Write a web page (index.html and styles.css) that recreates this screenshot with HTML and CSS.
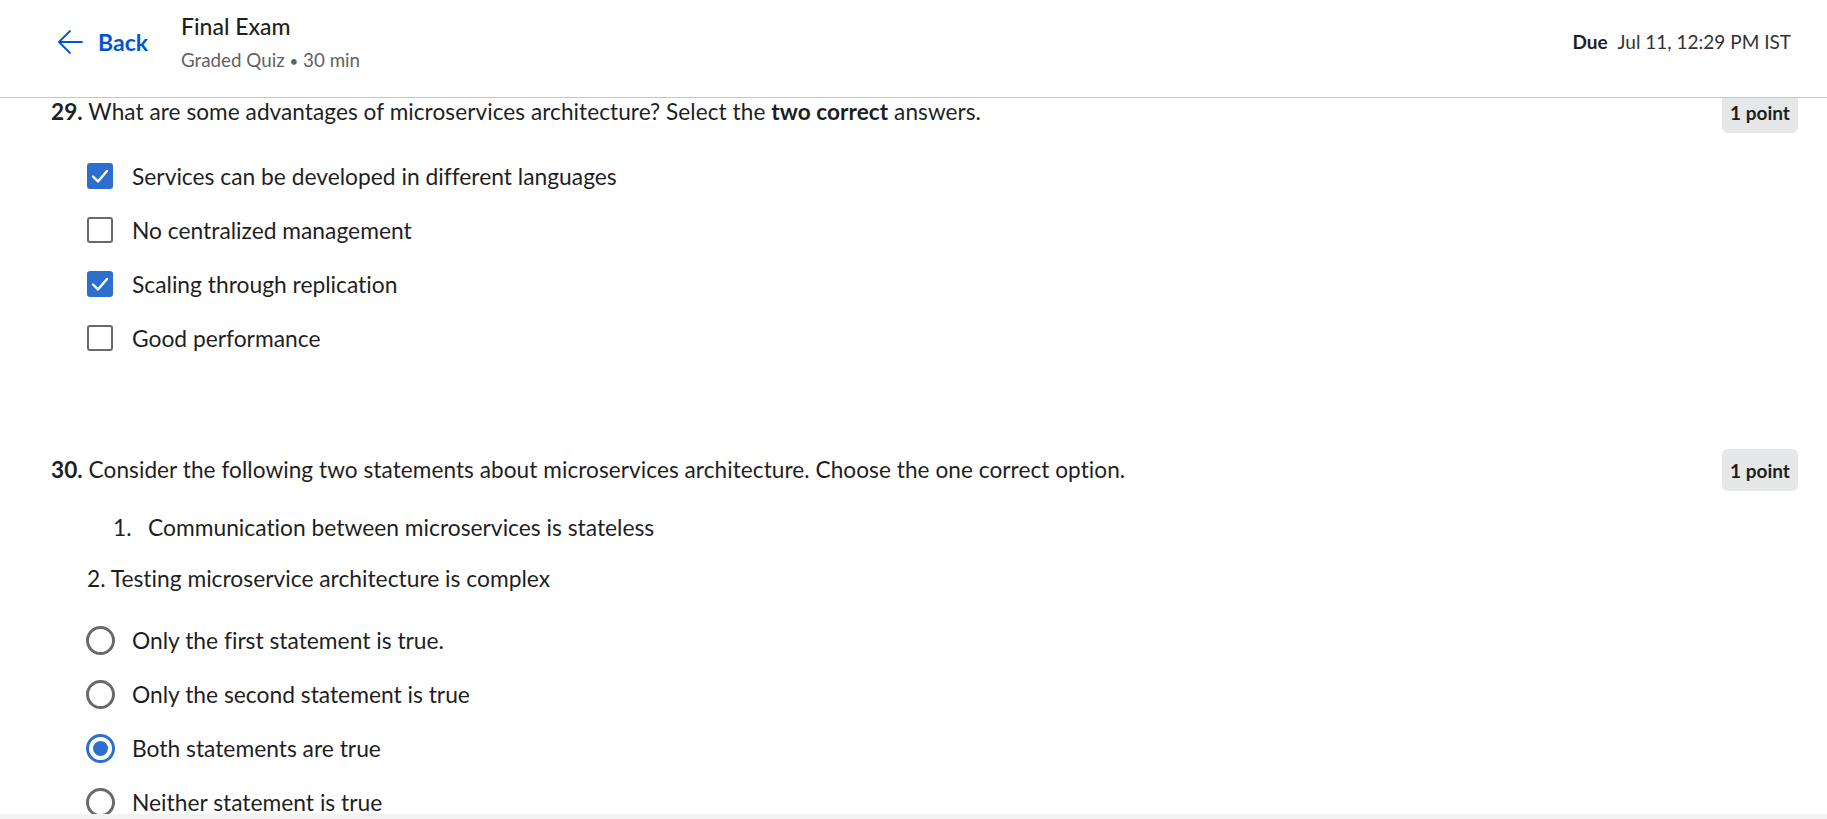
FILE: index.html
```html
<!DOCTYPE html>
<html lang="en">
<head>
<meta charset="utf-8">
<title>Final Exam</title>
<link rel="stylesheet" href="styles.css">
</head>
<body>
<header class="topbar">
  <a class="back" href="#">
    <svg class="back-icon" viewBox="0 0 26 26" width="26" height="26" aria-hidden="true">
      <path d="M25 13H2M13 2L2 13l11 11" fill="none" stroke="#0056d2" stroke-width="1.8" stroke-linecap="round" stroke-linejoin="round"/>
    </svg>
    <span class="back-label">Back</span>
  </a>
  <div class="title-block">
    <div class="title">Final Exam</div>
    <div class="subtitle">Graded Quiz <span class="dot">&bull;</span> 30 min</div>
  </div>
  <div class="due"><strong>Due</strong><span>Jul 11, 12:29 PM IST</span></div>
</header>

<main class="content">
  <section class="question">
    <div class="q-head">
      <div class="q-text"><strong class="q-num">29.</strong> What are some advantages of microservices architecture? Select the <strong>two correct</strong> answers.</div>
      <span class="points">1 point</span>
    </div>
    <ul class="options">
      <li class="option"><span class="box checked"><svg viewBox="0 0 26 26" width="26" height="26"><path d="M6 13.5l5 5 9-10.5" fill="none" stroke="#fff" stroke-width="2.4" stroke-linecap="round" stroke-linejoin="round"/></svg></span>Services can be developed in different languages</li>
      <li class="option"><span class="box"></span>No centralized management</li>
      <li class="option"><span class="box checked"><svg viewBox="0 0 26 26" width="26" height="26"><path d="M6 13.5l5 5 9-10.5" fill="none" stroke="#fff" stroke-width="2.4" stroke-linecap="round" stroke-linejoin="round"/></svg></span>Scaling through replication</li>
      <li class="option"><span class="box"></span>Good performance</li>
    </ul>
  </section>

  <section class="question q-second">
    <div class="q-head">
      <div class="q-text"><strong class="q-num">30.</strong> Consider the following two statements about microservices architecture. Choose the one correct option.</div>
      <span class="points">1 point</span>
    </div>
    <div class="statement-item"><span class="st-num">1.</span>Communication between microservices is stateless</div>
    <p class="statement">2. Testing microservice architecture is complex</p>
    <ul class="options radios">
      <li class="option"><span class="radio"></span>Only the first statement is true.</li>
      <li class="option"><span class="radio"></span>Only the second statement is true</li>
      <li class="option"><span class="radio selected"></span>Both statements are true</li>
      <li class="option"><span class="radio"></span>Neither statement is true</li>
    </ul>
  </section>
</main>
<div class="footer-edge"></div>
</body>
</html>
```
FILE: styles.css
```css
* { box-sizing: border-box; }
html, body { margin: 0; padding: 0; }
body {
  font-family: Lato, "Open Sans", sans-serif;
  font-variant-ligatures: none;
  color: #1f1f1f;
  background: #fff;
  overflow: hidden;
  height: 819px;
}

.topbar {
  position: fixed;
  top: 0; left: 0; right: 0;
  height: 98px;
  background: #fff;
  border-bottom: 1px solid #c6c6c6;
  display: flex;
  align-items: flex-start;
  padding: 0 36px 0 57px;
  z-index: 2;
}
.back {
  display: flex;
  align-items: center;
  gap: 15px;
  text-decoration: none;
  color: #0056d2;
  margin-top: 29px;
}
.back-icon { display: block; }
.back-label { font-weight: 700; font-size: 23px; line-height: 26px; }
.title-block { margin-left: 33px; margin-top: 11px; }
.title { font-size: 23px; font-weight: 500; line-height: 31px; color: #1f1f1f; }
.subtitle { font-size: 18.8px; line-height: 26px; color: #636363; margin-top: 5px; }
.dot { font-size: 15px; }
.due {
  margin-left: auto;
  margin-top: 29px;
  font-size: 19px;
  line-height: 26px;
  color: #333;
  display: flex;
  gap: 10px;
}
.due strong { color: #1f1f1f; }

.content { padding: 91px 29px 0 51px; }

.q-head {
  display: flex;
  align-items: center;
  justify-content: space-between;
  height: 42px;
}
.q-text { font-size: 22.6px; letter-spacing: 0.06px; line-height: 30px; }
.q-num { font-weight: 700; }
.points {
  background: #e6e7e9;
  border-radius: 6px;
  font-weight: 700;
  font-size: 19px;
  height: 42px;
  width: 76px;
  display: flex;
  align-items: center;
  justify-content: center;
  color: #1f1f1f;
}

.options { list-style: none; margin: 16px 0 0; padding: 0 0 0 36px; }
.radios { margin-top: 0; }
.option {
  display: flex;
  align-items: center;
  height: 54px;
  font-size: 22.8px;
}
.box {
  width: 26px; height: 26px;
  border: 2px solid #6a6a6a;
  border-radius: 3px;
  margin-right: 19px;
  flex: none;
  display: flex;
}
.box.checked { background: #2d6fcf; border-color: #2d6fcf; }
.box svg { display: block; margin: -2px; }

.radio {
  width: 29px; height: 29px;
  border: 3px solid #6a6a6a;
  border-radius: 50%;
  margin-right: 17px;
  margin-left: -1px;
  flex: none;
  display: flex;
  align-items: center;
  justify-content: center;
}
.radio.selected { border-color: #2d6fcf; }
.radio.selected::after {
  content: "";
  width: 15px; height: 15px;
  border-radius: 50%;
  background: #2d6fcf;
}

.q-second { margin-top: 84px; }
.statement-item {
  font-size: 22.8px;
  line-height: 32px;
  margin-top: 20px;
  padding-left: 62px;
  display: flex;
}
.st-num { width: 35px; flex: none; }
.statement {
  font-size: 22.8px;
  line-height: 32px;
  margin: 19px 0 19px 36px;
}

.footer-edge {
  position: fixed;
  left: 0; right: 0; bottom: 0;
  height: 5px;
  background: #f3f3f3;
}
```
